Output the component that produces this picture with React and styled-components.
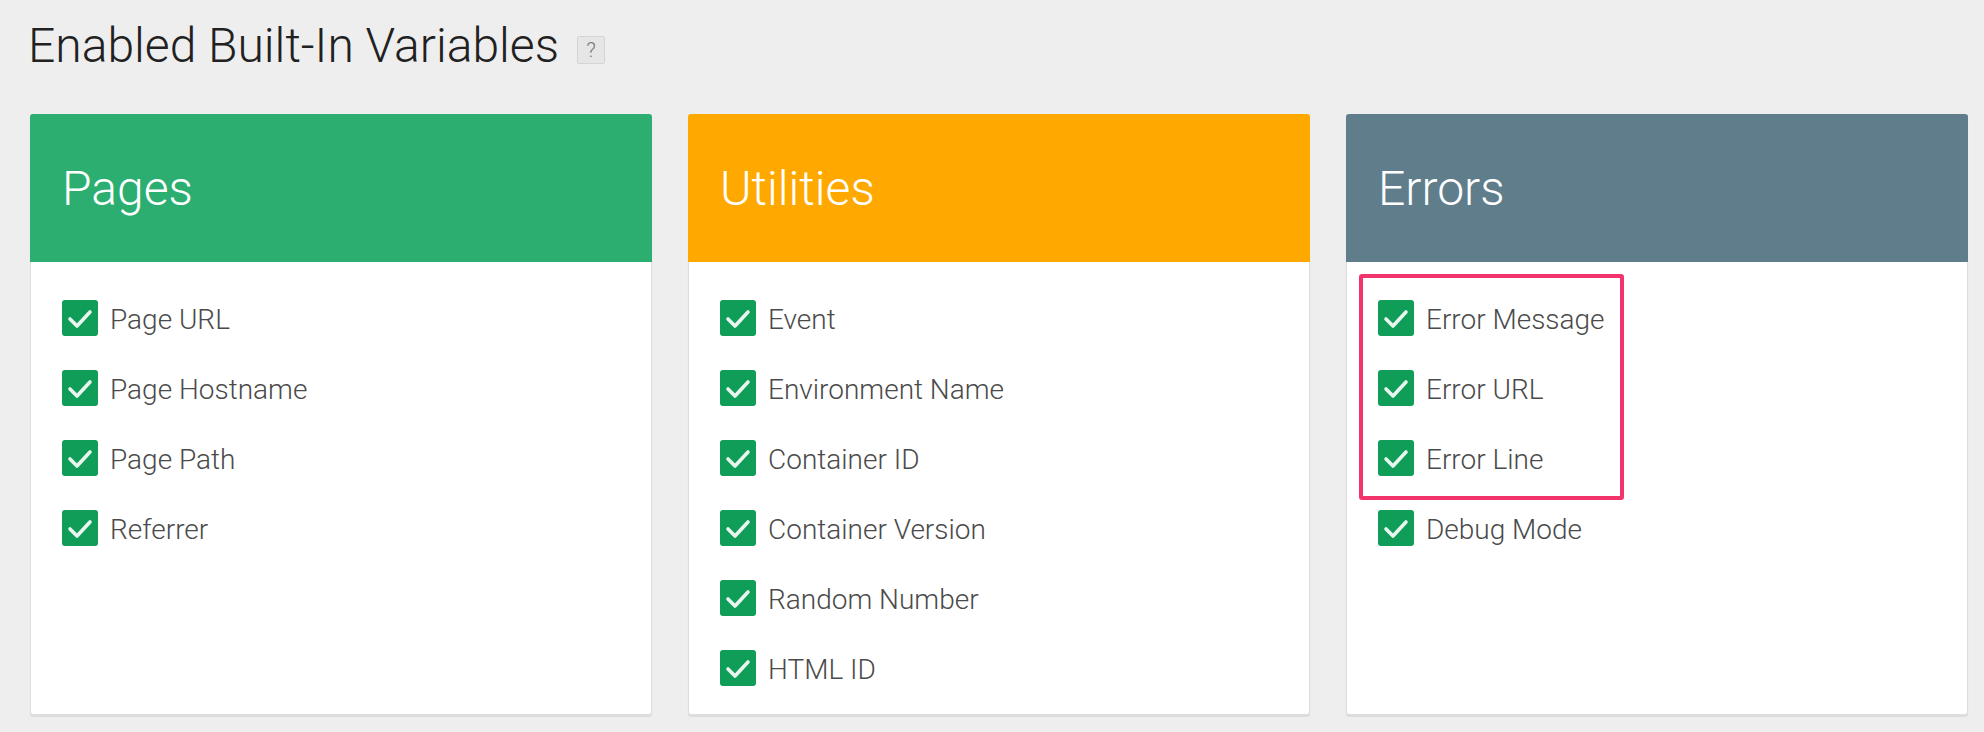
import React from "react";
import styled, { createGlobalStyle } from "styled-components";

const GlobalStyle = createGlobalStyle`
  html, body {
    margin: 0;
    padding: 0;
    background: #eeeeee;
  }
  body {
    font-family: Roboto, "Noto Sans", "Liberation Sans", sans-serif;
  }
`;

const Page = styled.div`
  width: 1984px;
  height: 732px;
  box-sizing: border-box;
  padding: 0 16px 0 30px;
  background: #eeeeee;
  overflow: hidden;
`;

const TitleRow = styled.div`
  display: flex;
  align-items: center;
  height: 114px;
  padding-bottom: 22px;
  box-sizing: border-box;
  gap: 18px;
`;

const Title = styled.h1`
  margin: 0 0 0 -2px;
  font-family: Roboto, sans-serif;
  font-weight: 300;
  font-size: 48px;
  line-height: 1;
  color: #212121;
`;

const HelpBox = styled.span`
  display: inline-flex;
  align-items: center;
  justify-content: center;
  width: 26px;
  height: 26px;
  margin-top: 8px;
  border: 1px solid #d4d4d4;
  border-radius: 2px;
  background: #e6e6e6;
  color: #777777;
  font-family: Roboto, sans-serif;
  font-size: 21px;
  font-weight: 300;
  line-height: 1;
`;

const Grid = styled.div`
  display: grid;
  grid-template-columns: repeat(3, 622px);
  column-gap: 36px;
`;

const Card = styled.section`
  position: relative;
  height: 601px;
  box-sizing: border-box;
  background: #ffffff;
  border: 1px solid #dedede;
  border-top: none;
  border-radius: 3px;
  box-shadow: 0 2px 1px rgba(0, 0, 0, 0.08);
`;

const CardHeader = styled.header`
  height: 148px;
  box-sizing: border-box;
  display: flex;
  align-items: center;
  padding-left: 32px;
  margin: 0 -1px;
  border-radius: 3px 3px 0 0;
  background: ${(p) => p.$color};
  color: #ffffff;
  font-family: Roboto, sans-serif;
  font-weight: 300;
  font-size: 48px;
`;

const List = styled.ul`
  list-style: none;
  margin: 0;
  padding: 38px 0 28px 31px;
  display: flex;
  flex-direction: column;
  gap: 34px;
`;

const Item = styled.li`
  display: flex;
  align-items: center;
  gap: 12px;
  height: 36px;
  line-height: 36px;
  font-family: Roboto, sans-serif;
  font-weight: 300;
  font-size: 28px;
  color: #4a4a4a;
`;

const Label = styled.span`
  padding-top: 3px;
`;

const Box = styled.span`
  flex: none;
  width: 36px;
  height: 36px;
  border-radius: 3px;
  background: #0f9d58;
  display: flex;
  align-items: center;
  justify-content: center;
`;

const Highlight = styled.div`
  position: absolute;
  left: 12px;
  top: 160px;
  width: 265px;
  height: 226px;
  box-sizing: border-box;
  border: 4px solid #f2336c;
  border-radius: 3px;
  pointer-events: none;
`;

const Check = () => (
  <Box>
    <svg width="36" height="36" viewBox="0 0 36 36" fill="none">
      <path
        d="M8 19 L15 26 L28 12"
        stroke="#e9f6ef"
        strokeWidth="3.6"
        strokeLinecap="round"
        strokeLinejoin="round"
      />
    </svg>
  </Box>
);

const groups = [
  {
    title: "Pages",
    color: "#2bae70",
    items: ["Page URL", "Page Hostname", "Page Path", "Referrer"],
  },
  {
    title: "Utilities",
    color: "#ffa800",
    items: [
      "Event",
      "Environment Name",
      "Container ID",
      "Container Version",
      "Random Number",
      "HTML ID",
    ],
  },
  {
    title: "Errors",
    color: "#607d8b",
    items: ["Error Message", "Error URL", "Error Line", "Debug Mode"],
    highlight: true,
  },
];

export default function App() {
  return (
    <>
      <GlobalStyle />
      <Page>
        <TitleRow>
          <Title>Enabled Built-In Variables</Title>
          <HelpBox>?</HelpBox>
        </TitleRow>
        <Grid>
          {groups.map((g) => (
            <Card key={g.title}>
              <CardHeader $color={g.color}>{g.title}</CardHeader>
              <List>
                {g.items.map((it) => (
                  <Item key={it}>
                    <Check />
                    <Label>{it}</Label>
                  </Item>
                ))}
              </List>
              {g.highlight && <Highlight />}
            </Card>
          ))}
        </Grid>
      </Page>
    </>
  );
}
